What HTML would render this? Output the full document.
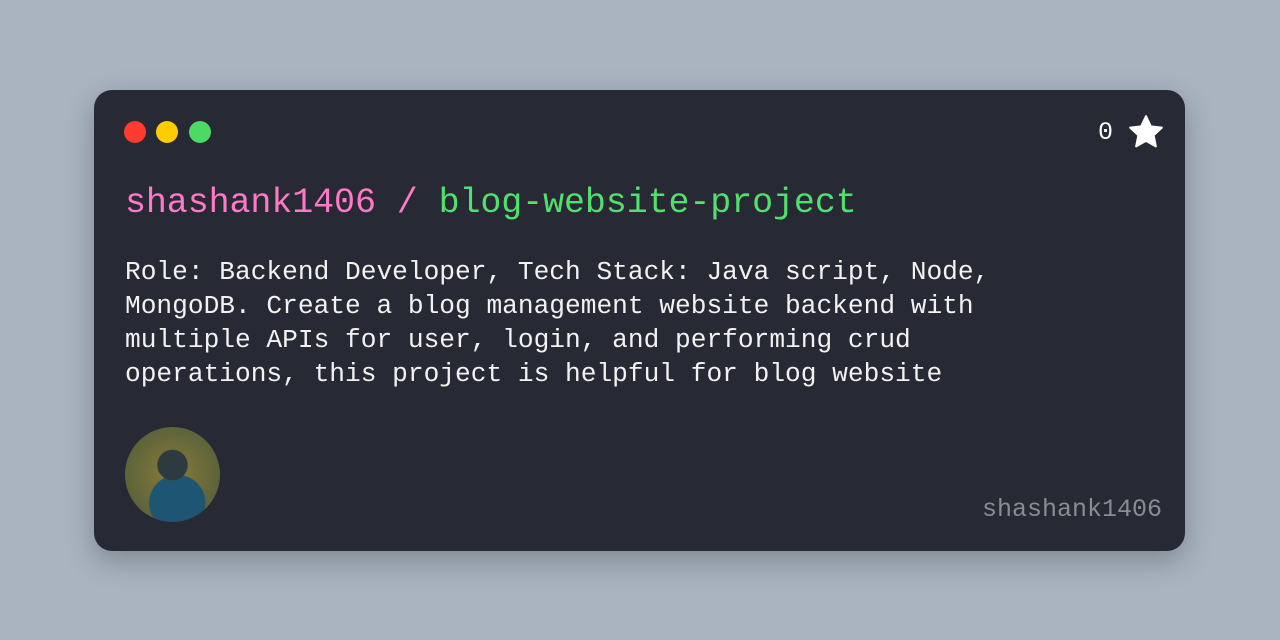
<!DOCTYPE html>
<html><head><style>
body{margin:0;width:1280px;height:640px;background:#a9b4c0;position:relative;overflow:hidden;font-family:"Liberation Mono",monospace}
.card{position:absolute;left:94px;top:90px;width:1091px;height:461px;background:#272934;border-radius:18px;box-shadow:0 10px 30px rgba(0,0,0,.25)}
.dot{position:absolute;top:31px;width:22px;height:22px;border-radius:50%}
.t{position:absolute;left:31px;top:93px;font-size:35px;white-space:nowrap;letter-spacing:-0.1px}
.d{position:absolute;left:31px;top:165px;font-size:26.2px;line-height:34px;color:#f2f2f2;white-space:pre}
.av{position:absolute;left:31px;top:337px;width:95px;height:95px;border-radius:50%;background:radial-gradient(circle at 50% 40%,#2d3a3f 0 20%,transparent 21%),radial-gradient(circle at 55% 80%,#1d5573 0 30%,transparent 31%),radial-gradient(circle,#8a7a3a,#4a5a3a)}
.u{position:absolute;right:23px;top:405px;font-size:25px;color:#8a8c93}
.s{position:absolute;left:1004px;top:28px;font-size:25px;color:#fff}
</style></head><body>
<div class="card">
<div class="dot" style="left:30px;background:#ff3b30"></div>
<div class="dot" style="left:62px;background:#ffcc00"></div>
<div class="dot" style="left:95px;background:#4cd964"></div>
<div class="s">0</div>
<svg style="position:absolute;left:1032px;top:22px" width="40" height="40" viewBox="0 0 24 24"><path d="M12 2.5l2.9 6.1 6.6.8-4.9 4.6 1.3 6.6L12 17.3l-5.9 3.3 1.3-6.6-4.9-4.6 6.6-.8z" fill="#fff" stroke="#fff" stroke-width="1.2" stroke-linejoin="round"/></svg>
<div class="t"><span style="color:#ff79c6">shashank1406 / </span><span style="color:#50e16c">blog-website-project</span></div>
<div class="d">Role: Backend Developer, Tech Stack: Java script, Node,
MongoDB. Create a blog management website backend with
multiple APIs for user, login, and performing crud
operations, this project is helpful for blog website</div>
<div class="av"></div>
<div class="u">shashank1406</div>
</div>
</body></html>
